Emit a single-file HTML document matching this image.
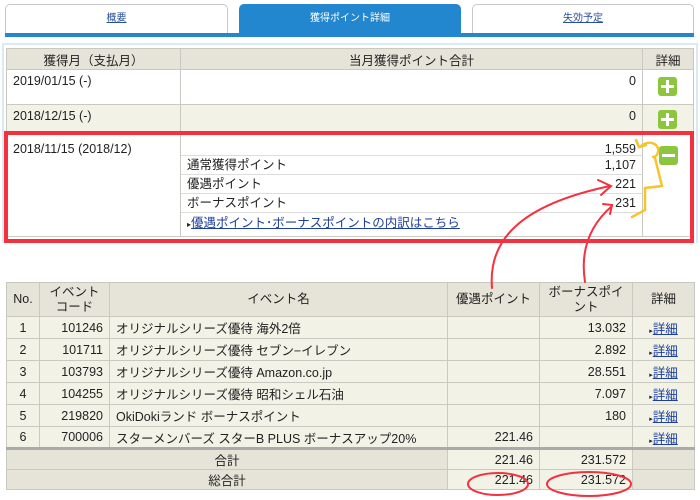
<!DOCTYPE html><html><head><meta charset="utf-8"><style>
body{margin:0;width:700px;height:500px;background:#fff;position:relative;overflow:hidden;font-family:"Liberation Sans","Noto Sans CJK JP",sans-serif;font-size:12.5px;color:#222}
.a{position:absolute;box-sizing:border-box}
.tab{border:1px solid #c8c8c8;border-bottom:none;border-radius:5px 5px 0 0;text-align:center;line-height:28px;font-size:10px;color:#2a4f9a;text-decoration:underline;background:#fff}
table{border-collapse:collapse;position:absolute;font-size:12.5px;table-layout:fixed}
td,th{border:1px solid #c9c9c2;padding:0 6px;font-weight:normal;white-space:nowrap;overflow:hidden}
th{background:#e6e4d8}
.r{text-align:right}.c{text-align:center}
.be{background:#f3f2e7}
a{color:#1d3f9e}
.plus{position:absolute;width:19px;height:19px;background:#8cc63e;border-radius:3px}
.plus:before{content:"";position:absolute;left:3px;top:8px;width:13px;height:3px;background:#fff}
.plus.p:after{content:"";position:absolute;left:8px;top:3px;width:3px;height:13px;background:#fff}
</style></head><body>
<div class="a tab" style="left:5px;top:4px;width:223px;height:30px">概要</div>
<div class="a tab" style="left:239px;top:4px;width:222px;height:30px;background:#2287cf;border-color:#2287cf;color:#fff;text-decoration:none">獲得ポイント詳細</div>
<div class="a tab" style="left:472px;top:4px;width:222px;height:30px">失効予定</div>
<div class="a" style="left:5px;top:33px;width:689px;height:4px;background:#2287cf"></div>
<div class="a" style="left:2px;top:43px;width:696px;height:200px;border:2px solid #dbe8f5;border-bottom:none"></div>

<table style="left:6px;top:48px;width:688px">
<colgroup><col style="width:174px"><col><col style="width:51px"></colgroup>
<tr style="height:21px"><th>獲得月（支払月）</th><th>当月獲得ポイント合計</th><th>詳細</th></tr>
<tr style="height:35px;vertical-align:top"><td style="padding-top:4px">2019/01/15 (-)</td><td class="r" style="padding-top:4px">0</td><td></td></tr>
<tr class="be" style="height:29px;vertical-align:top"><td style="padding-top:4px">2018/12/15 (-)</td><td class="r" style="padding-top:4px">0</td><td></td></tr>
<tr style="height:103px;vertical-align:top"><td style="padding-top:8px">2018/11/15 (2018/12)</td><td style="padding:0">
<div style="height:19px;line-height:26px;text-align:right;padding-right:6px;border-bottom:1px solid #ddd;margin-top:2px">1,559</div>
<div style="height:18px;line-height:18px;padding:0 6px;border-bottom:1px solid #ddd">通常獲得ポイント<span style="float:right">1,107</span></div>
<div style="height:18px;line-height:18px;padding:0 6px;border-bottom:1px solid #ddd">優遇ポイント<span style="float:right">221</span></div>
<div style="height:18px;line-height:18px;padding:0 6px;border-bottom:1px solid #ddd">ボーナスポイント<span style="float:right">231</span></div>
<div style="height:20px;line-height:20px;padding:0 6px"><span style="font-size:8px">▸</span><a href="#" style="text-decoration:underline">優遇ポイント･ボーナスポイントの内訳はこちら</a></div>
</td><td></td></tr>
</table>
<div class="plus p" style="left:658px;top:77px"></div>
<div class="plus p" style="left:658px;top:110px"></div>
<div class="plus" style="left:659px;top:146px"></div>
<div class="a" style="left:4px;top:131px;width:690px;height:112px;border:4px solid #f5303f"></div>

<table style="left:6px;top:282px;width:688px">
<colgroup><col style="width:33px"><col style="width:70px"><col style="width:338px"><col style="width:92px"><col style="width:93px"><col style="width:62px"></colgroup>
<tr style="height:34px;line-height:15px"><th class="c" style="padding:0">No.</th><th style="padding:0">イベント<br>コード</th><th>イベント名</th><th style="padding:0">優遇ポイント</th><th style="padding:0">ボーナスポイ<br>ント</th><th>詳細</th></tr>
<tr class="be" style="height:22px"><td class="c">1</td><td class="r">101246</td><td>オリジナルシリーズ優待 海外2倍</td><td></td><td class="r">13.032</td><td class="c"><span style="font-size:7px">▸</span><a href="#">詳細</a></td></tr>
<tr class="be" style="height:22px"><td class="c">2</td><td class="r">101711</td><td>オリジナルシリーズ優待 セブン−イレブン</td><td></td><td class="r">2.892</td><td class="c"><span style="font-size:7px">▸</span><a href="#">詳細</a></td></tr>
<tr class="be" style="height:22px"><td class="c">3</td><td class="r">103793</td><td>オリジナルシリーズ優待 Amazon.co.jp</td><td></td><td class="r">28.551</td><td class="c"><span style="font-size:7px">▸</span><a href="#">詳細</a></td></tr>
<tr class="be" style="height:22px"><td class="c">4</td><td class="r">104255</td><td>オリジナルシリーズ優待 昭和シェル石油</td><td></td><td class="r">7.097</td><td class="c"><span style="font-size:7px">▸</span><a href="#">詳細</a></td></tr>
<tr class="be" style="height:22px"><td class="c">5</td><td class="r">219820</td><td>OkiDokiランド ボーナスポイント</td><td></td><td class="r">180</td><td class="c"><span style="font-size:7px">▸</span><a href="#">詳細</a></td></tr>
<tr class="be" style="height:22px;border-bottom:3px solid #aaa"><td class="c">6</td><td class="r">700006</td><td>スターメンバーズ スターB PLUS ボーナスアップ20%</td><td class="r">221.46</td><td></td><td class="c"><span style="font-size:7px">▸</span><a href="#">詳細</a></td></tr>
<tr style="height:21px"><td colspan="3" class="c" style="background:#e6e4d8">合計</td><td class="r be">221.46</td><td class="r be">231.572</td><td style="background:#e6e4d8"></td></tr>
<tr style="height:20px"><td colspan="3" class="c" style="background:#e6e4d8">総合計</td><td class="r be">221.46</td><td class="r be">231.572</td><td style="background:#e6e4d8"></td></tr>
</table>

<svg class="a" style="left:0;top:0" width="700" height="500">
<g fill="none" stroke="#f5303f" stroke-width="2" stroke-linecap="round">
<path d="M492 288 C488 240 520 205 610 186"/><path d="M598 180 L611 186 L601 195"/>
<path d="M585 282 C580 250 590 225 612 206"/><path d="M603 204 L612 205 L610 214"/>
<ellipse cx="498" cy="484" rx="30" ry="11"/>
<ellipse cx="589" cy="484" rx="42" ry="12"/>
</g>
<g fill="none" stroke="#f6c42b" stroke-width="2.5" stroke-linecap="round">
<path d="M640 147 C650 138 660 145 658 152 C656 160 650 155 655 158 L662 186 L645 188 L645 210 L632 217"/>
<path d="M636 140 L639 147 L646 145"/>
</g>
</svg>
</body></html>
